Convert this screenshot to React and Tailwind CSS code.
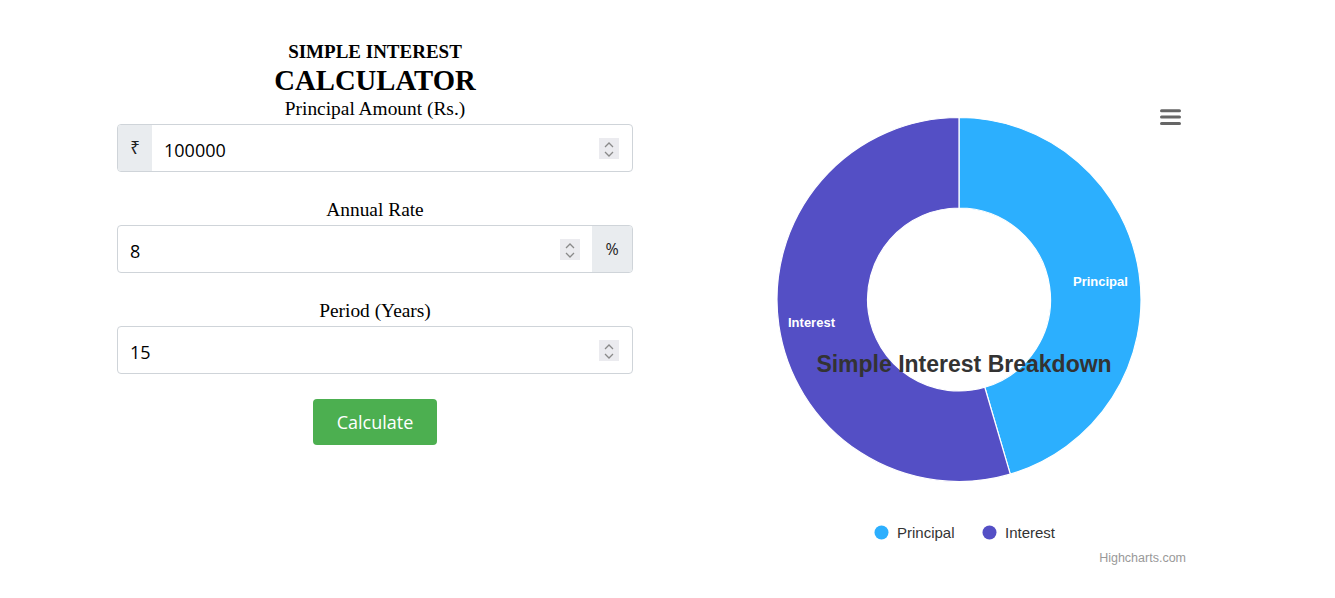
import React from "react";

const serif = { fontFamily: '"Liberation Serif", "Times New Roman", serif' };
const sans = { fontFamily: '"Open Sans", "Noto Sans", sans-serif' };

function Spinner({ className = "" }) {
  return (
    <div className={"w-[20px] h-[21px] bg-[#ebebef] shrink-0 flex items-center justify-center " + className}>
      <svg width="20" height="21" viewBox="0 0 20 21">
        <polyline points="6,9 10,5 14,9" fill="none" stroke="#8a8a8a" strokeWidth="1.3" />
        <polyline points="6,14 10,18 14,14" fill="none" stroke="#8a8a8a" strokeWidth="1.3" />
      </svg>
    </div>
  );
}

function Field({ label, value, prepend, append }) {
  return (
    <div className="w-full">
      <div className="text-center text-[19.4px] leading-[24px] text-black mb-[3px]" style={serif}>
        {label}
      </div>
      <div className="flex items-stretch h-[48px] w-full border border-[#cfd4d9] rounded-[4px] overflow-hidden bg-white">
        {prepend && (
          <div
            className="w-[34px] shrink-0 bg-[#e9ecef] flex items-center justify-center text-[17px] text-[#222]"
            style={{ fontFamily: '"Noto Sans", "DejaVu Sans", sans-serif' }}
          >
            {prepend}
          </div>
        )}
        <div className="flex-1 flex items-center">
          <input
            type="text"
            readOnly
            value={value}
            className="flex-1 min-w-0 h-full pl-[12px] pt-[3px] text-[18px] text-black bg-transparent outline-none"
            style={sans}
          />
          <Spinner className={append ? "mr-[12px]" : "mr-[13px]"} />
        </div>
        {append && (
          <div
            className="w-[40px] shrink-0 bg-[#e9ecef] flex items-center justify-center text-[16px] text-[#222]"
            style={sans}
          >
            {append}
          </div>
        )}
      </div>
    </div>
  );
}

function Chart() {
  const cx = 227;
  const cy = 209.5;
  const R = 182;
  const r = 91.5;
  const principal = 100000;
  const interest = (100000 * 8 * 15) / 100;
  const frac = principal / (principal + interest);
  const th = frac * 2 * Math.PI;
  const ox = cx + R * Math.sin(th);
  const oy = cy - R * Math.cos(th);
  const ix = cx + r * Math.sin(th);
  const iy = cy - r * Math.cos(th);
  const pPath = `M ${cx} ${cy - R} A ${R} ${R} 0 0 1 ${ox} ${oy} L ${ix} ${iy} A ${r} ${r} 0 0 0 ${cx} ${cy - r} Z`;
  const iPath = `M ${ox} ${oy} A ${R} ${R} 0 1 1 ${cx} ${cy - R} L ${cx} ${cy - r} A ${r} ${r} 0 1 0 ${ix} ${iy} Z`;
  const font = '"Liberation Sans", Arial, Helvetica, sans-serif';
  return (
    <svg width="470" height="490" viewBox="0 0 470 490" style={{ fontFamily: font }}>
      <path d={pPath} fill="#2caffe" stroke="#ffffff" strokeWidth="1.2" strokeLinejoin="round" />
      <path d={iPath} fill="#544fc5" stroke="#ffffff" strokeWidth="1.2" strokeLinejoin="round" />
      <text x="341" y="196" fill="#ffffff" fontSize="13" fontWeight="bold">Principal</text>
      <text x="56" y="237" fill="#ffffff" fontSize="13" fontWeight="bold">Interest</text>
      <text x="232" y="282" fill="#333333" fontSize="23" fontWeight="bold" textAnchor="middle">
        Simple Interest Breakdown
      </text>
      <g stroke="#666666" strokeWidth="3" strokeLinecap="round">
        <line x1="429.5" y1="20.7" x2="447.5" y2="20.7" />
        <line x1="429.5" y1="27" x2="447.5" y2="27" />
        <line x1="429.5" y1="33.4" x2="447.5" y2="33.4" />
      </g>
      <circle cx="149.5" cy="442.5" r="7" fill="#2caffe" />
      <text x="165" y="448" fill="#333333" fontSize="15">Principal</text>
      <circle cx="257.5" cy="442.5" r="7" fill="#544fc5" />
      <text x="273" y="448" fill="#333333" fontSize="15">Interest</text>
      <text x="454" y="472" fill="#999999" fontSize="12.5" textAnchor="end">Highcharts.com</text>
    </svg>
  );
}

export default function App() {
  return (
    <div className="w-[1335px] h-[598px] bg-white flex items-start overflow-hidden">
      <div className="w-[516px] ml-[117px] pt-[40px] flex flex-col items-center">
        <div className="text-[19px] leading-[24px] font-bold text-black" style={serif}>
          SIMPLE INTEREST
        </div>
        <div className="text-[28.7px] leading-[32px] font-bold text-black mb-[1px]" style={serif}>
          CALCULATOR
        </div>
        <div className="w-full flex flex-col gap-[26px]">
          <Field label="Principal Amount (Rs.)" value="100000" prepend="₹" />
          <Field label="Annual Rate" value="8" append="%" />
          <Field label="Period (Years)" value="15" />
        </div>
        <button
          className="mt-[25px] w-[124px] h-[46px] rounded-[4px] bg-[#4caf50] text-white text-[18px] flex items-center justify-center"
          style={sans}
        >
          Calculate
        </button>
      </div>
      <div className="ml-[99px] mt-[90px]">
        <Chart />
      </div>
    </div>
  );
}
